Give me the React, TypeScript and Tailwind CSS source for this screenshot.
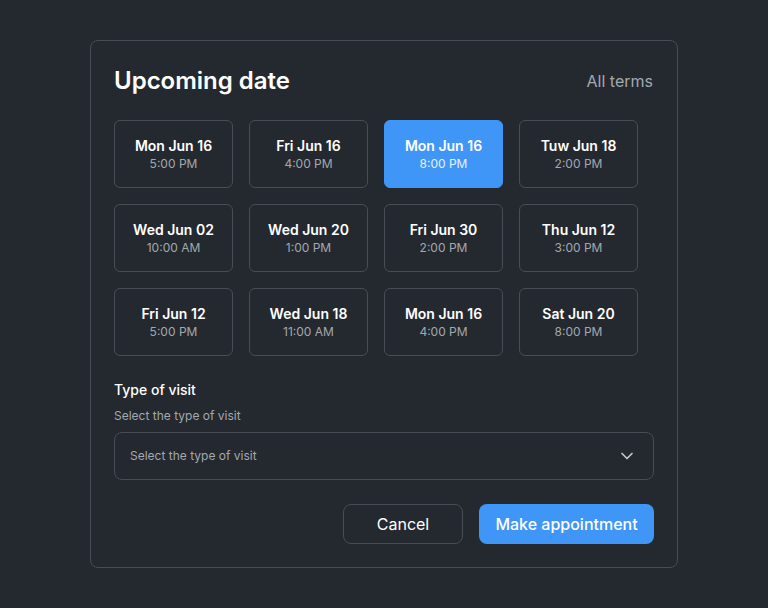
import { ChevronDown } from 'lucide-react'

const slots = [
  { day: 'Mon Jun 16', time: '5:00 PM' },
  { day: 'Fri Jun 16', time: '4:00 PM' },
  { day: 'Mon Jun 16', time: '8:00 PM', active: true },
  { day: 'Tuw Jun 18', time: '2:00 PM' },
  { day: 'Wed Jun 02', time: '10:00 AM' },
  { day: 'Wed Jun 20', time: '1:00 PM' },
  { day: 'Fri Jun 30', time: '2:00 PM' },
  { day: 'Thu Jun 12', time: '3:00 PM' },
  { day: 'Fri Jun 12', time: '5:00 PM' },
  { day: 'Wed Jun 18', time: '11:00 AM' },
  { day: 'Mon Jun 16', time: '4:00 PM' },
  { day: 'Sat Jun 20', time: '8:00 PM' },
]

export default function App() {
  return (
    <div
      className="min-h-[608px] w-full bg-[#242930] pt-10 flex justify-center"
      style={{ fontFamily: 'Inter, "Noto Sans", sans-serif' }}
    >
      <div className="w-[588px] h-[528px] rounded-lg border border-[#474d54] px-[23px] pt-6 flex flex-col">
        {/* header */}
        <div className="flex items-center justify-between h-8">
          <h1 className="text-[24px] leading-8 font-semibold text-white">Upcoming date</h1>
          <span className="text-[16px] text-[#a3a8ae] mr-px">All terms</span>
        </div>

        {/* slots */}
        <div className="mt-[23px] grid grid-cols-[repeat(4,119px)] gap-4">
          {slots.map((s, i) => (
            <button
              key={i}
              className={
                s.active
                  ? 'h-[68px] rounded-md bg-[#4096f7] border border-[#4096f7] flex flex-col items-center justify-center'
                  : 'h-[68px] rounded-md border border-[#474d54] flex flex-col items-center justify-center'
              }
            >
              <span className="text-[14px] leading-5 font-semibold text-white">{s.day}</span>
              <span
                className={
                  s.active
                    ? 'text-[12px] leading-4 text-[#e8f1fd]'
                    : 'text-[12px] leading-4 text-[#a3a8ae]'
                }
              >
                {s.time}
              </span>
            </button>
          ))}
        </div>

        {/* type of visit */}
        <div className="mt-6">
          <p className="text-[14px] leading-5 font-medium text-white">Type of visit</p>
          <p className="mt-[8px] text-[12px] leading-4 text-[#a3a8ae]">Select the type of visit</p>
          <div className="mt-[8px] h-12 rounded-lg border border-[#474d54] pl-[15px] pr-4 flex items-center justify-between">
            <span className="text-[12px] text-[#a3a8ae]">Select the type of visit</span>
            <ChevronDown className="w-5 h-5 text-[#c5c9ce]" strokeWidth={2} />
          </div>
        </div>

        {/* actions */}
        <div className="mt-6 flex justify-end gap-4">
          <button className="w-[120px] h-10 rounded-lg border border-[#474d54] text-[16px] text-white">
            Cancel
          </button>
          <button className="w-[175px] h-10 rounded-lg bg-[#4096f7] text-[16px] font-medium text-white">
            Make appointment
          </button>
        </div>
      </div>
    </div>
  )
}
